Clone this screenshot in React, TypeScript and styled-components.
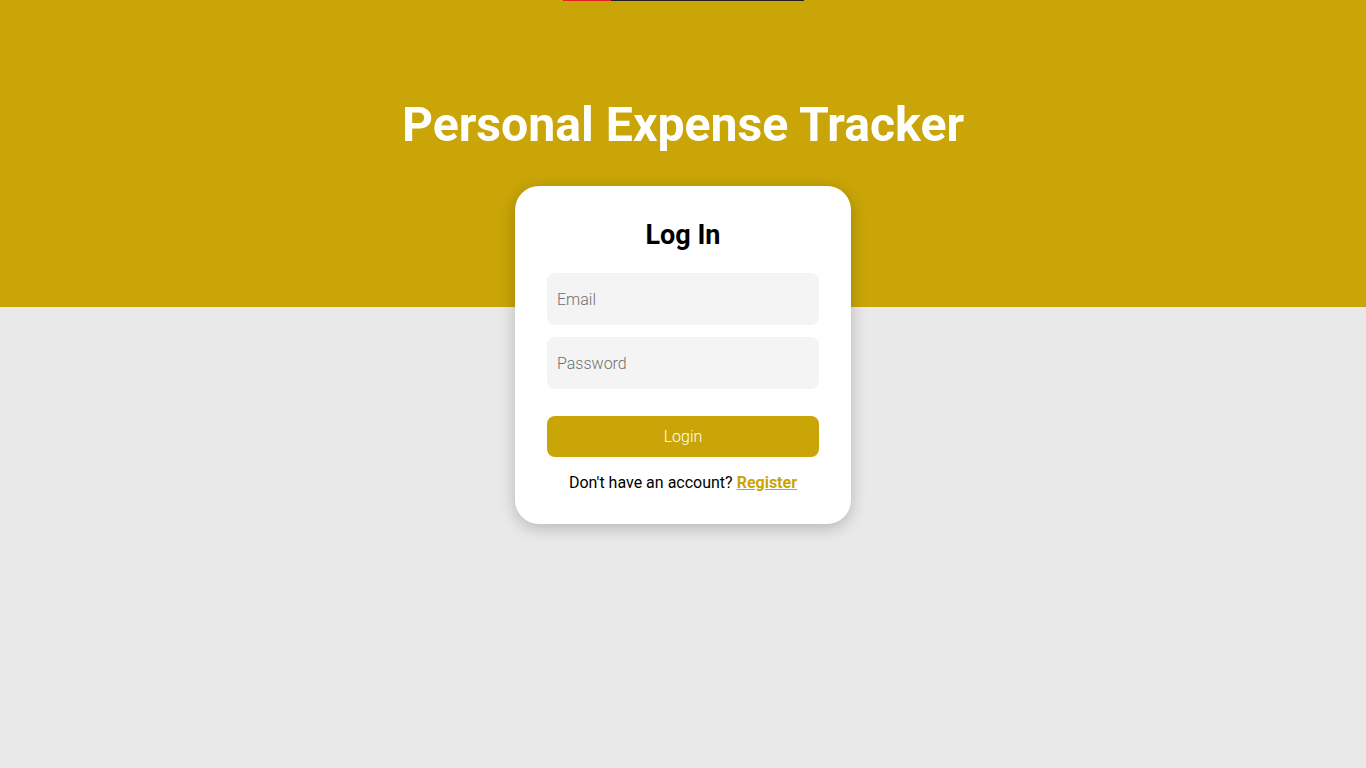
import React from "react";
import styled, { createGlobalStyle } from "styled-components";

const Global = createGlobalStyle`
  html, body { margin: 0; padding: 0; }
  body {
    background: #e9e9e9;
    font-family: Roboto, "Liberation Sans", Arial, sans-serif;
  }
  * { box-sizing: border-box; }
`;

const YELLOW = "#c9a507";

const Page = styled.div`
  min-height: 768px;
  display: flex;
  flex-direction: column;
  align-items: center;
  background: #e9e9e9;
`;

const Header = styled.header`
  width: 100%;
  height: 307px;
  background: ${YELLOW};
  display: flex;
  flex-direction: column;
  align-items: center;
`;

const Progress = styled.div`
  width: 241px;
  height: 1px;
  display: flex;
  background: #222;
`;

const ProgressFill = styled.div`
  width: 48px;
  height: 100%;
  background: #e02424;
`;

const Title = styled.h1`
  margin: 96px 0 0;
  font-size: 48.2px;
  line-height: 56px;
  font-weight: 700;
  color: #fff;
`;

const Card = styled.div`
  width: 336px;
  margin-top: -121px;
  background: #fff;
  border-radius: 24px;
  box-shadow: 0 4px 16px rgba(0, 0, 0, 0.22);
  padding: 34px 32px 32px;
  display: flex;
  flex-direction: column;
`;

const CardTitle = styled.h2`
  margin: 0 0 23px;
  text-align: center;
  font-size: 27px;
  line-height: 30px;
  font-weight: 700;
  color: #000;
`;

const Input = styled.input`
  height: 52px;
  width: 100%;
  border: none;
  outline: none;
  border-radius: 8px;
  background: #f4f4f4;
  padding: 0 10px;
  font-family: Roboto, "Liberation Sans", Arial, sans-serif;
  font-size: 16px;
  font-weight: 300;
  color: #333;
  margin-bottom: 12px;
  &::placeholder { color: #6f6f6f; }
`;

const Button = styled.button`
  margin-top: 15px;
  height: 41px;
  width: 100%;
  border: none;
  border-radius: 8px;
  background: ${YELLOW};
  color: #fff;
  font-family: Roboto, "Liberation Sans", Arial, sans-serif;
  font-size: 16px;
  font-weight: 300;
  cursor: pointer;
`;

const Footer = styled.p`
  margin: 16px 0 0;
  text-align: center;
  font-size: 16px;
  line-height: 19px;
  color: #000;
`;

const Link = styled.a`
  color: ${YELLOW};
  font-weight: 700;
  text-decoration: underline;
`;

export default function App() {
  return (
    <>
      <Global />
      <Page>
        <Header>
          <Progress>
            <ProgressFill />
          </Progress>
          <Title>Personal Expense Tracker</Title>
        </Header>
        <Card>
          <CardTitle>Log In</CardTitle>
          <Input type="email" placeholder="Email" />
          <Input type="password" placeholder="Password" />
          <Button>Login</Button>
          <Footer>
            Don't have an account? <Link href="#">Register</Link>
          </Footer>
        </Card>
      </Page>
    </>
  );
}
